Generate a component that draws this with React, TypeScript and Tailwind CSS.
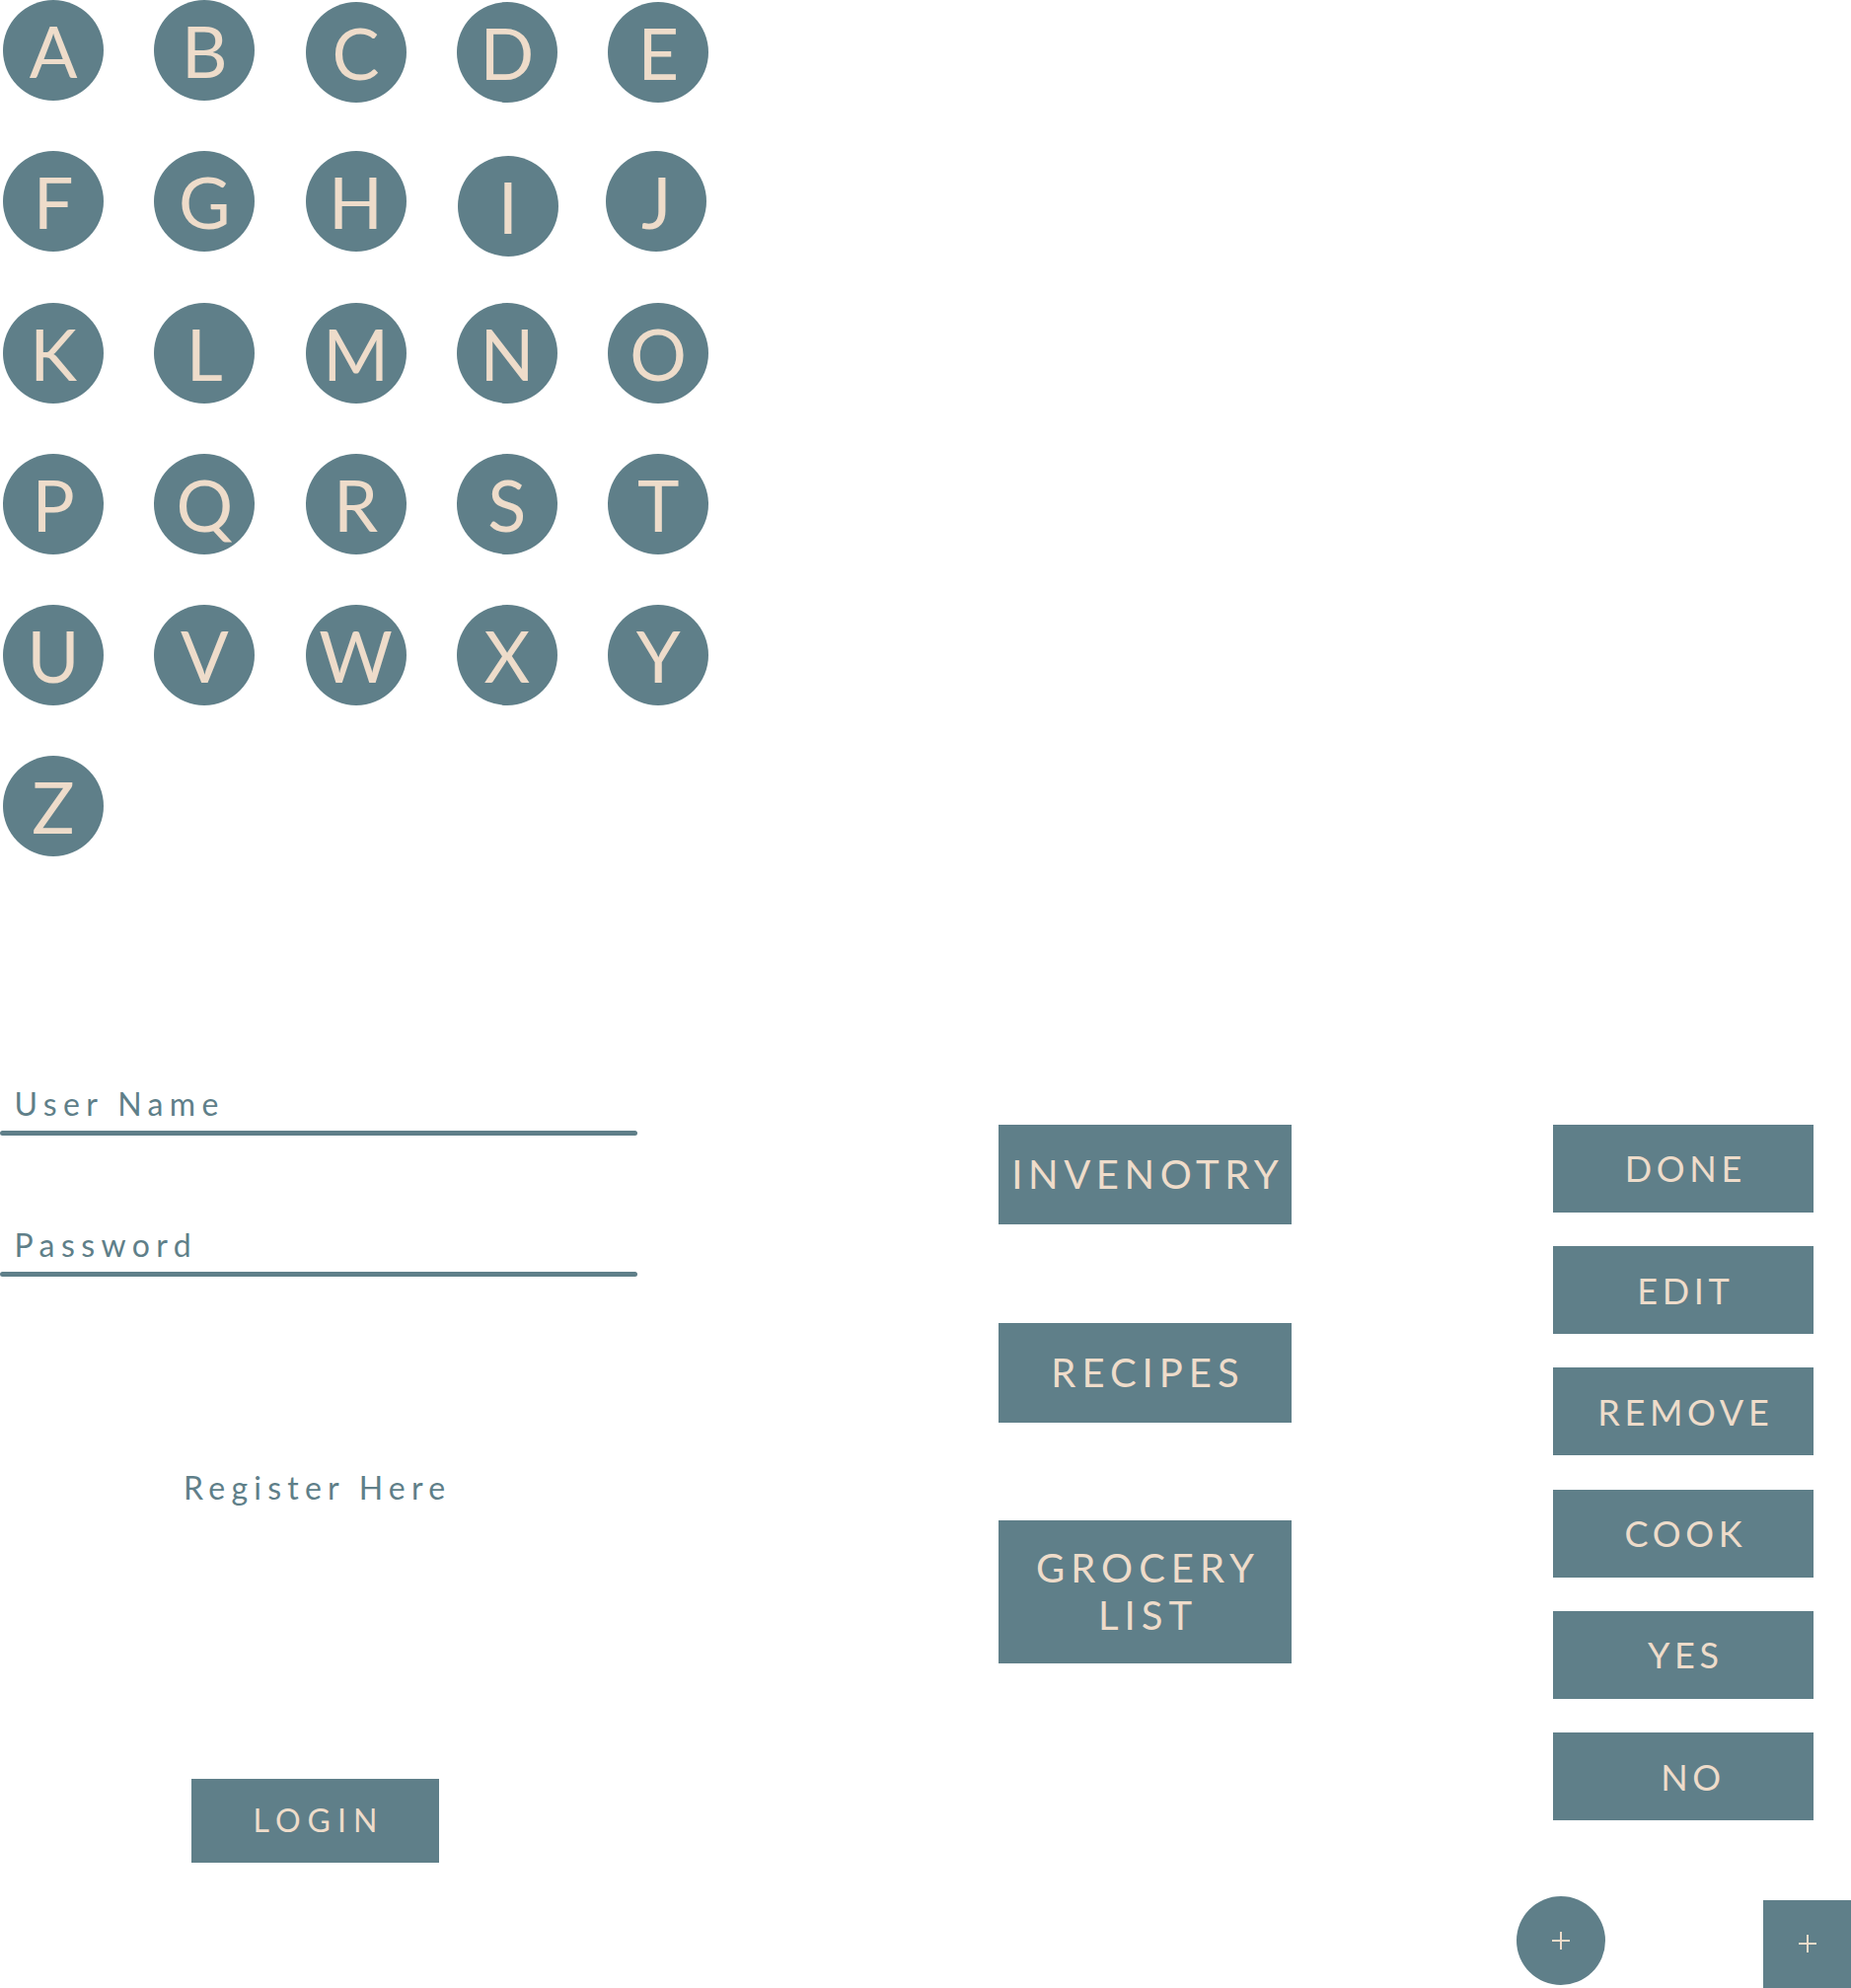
const letters = "ABCDEFGHIJKLMNOPQRSTUVWXYZ".split("");

// tiny offsets the mockup has on a few of the circles (transform so the grid rows stay put)
const nudge: Record<string, string> = {
  C: "translate-y-[2px]",
  D: "translate-y-[2px]",
  E: "translate-y-[2px]",
  I: "translate-y-[5px] translate-x-[1px]",
  J: "-translate-x-[2px]",
};

const rightButtons = ["DONE", "EDIT", "REMOVE", "COOK", "YES", "NO"];

function Plus() {
  return (
    <svg width="20" height="20" viewBox="0 0 20 20" fill="none" stroke="#EEDCCA" strokeWidth="2">
      <path d="M10 1v18M1 10h18" />
    </svg>
  );
}

function Underline() {
  return <div className="mt-[11px] h-[5px] w-[646px] rounded-full bg-[#5F7F89]" />;
}

export default function App() {
  return (
    <div className="relative h-[2015px] w-[1876px] overflow-hidden bg-white [font-family:Lato,'Liberation_Sans',sans-serif]">
      {/* letter avatars */}
      <div className="grid grid-cols-[repeat(5,102px)] gap-[51.3px] pl-[3px]">
        {letters.map((l) => (
          <div
            key={l}
            className={`flex h-[102px] w-[102px] items-center justify-center rounded-full bg-[#5F7F89] text-[72px] leading-none font-normal text-[#EEDCCA] ${nudge[l] ?? ""}`}
          >
            {l}
          </div>
        ))}
      </div>

      <div className="mt-[232px] flex items-start">
        {/* login form */}
        <div className="flex w-[646px] flex-col pt-[2.5px]">
          <div className="pl-[14.5px] text-[32px] leading-none tracking-[0.2em] text-[#5F7F89]">User Name</div>
          <Underline />
          <div className="mt-[94.7px] pl-[14.5px] text-[32px] leading-none tracking-[0.2em] text-[#5F7F89]">
            Password
          </div>
          <Underline />
          <div className="mt-[198px] ml-[186px] text-[32px] leading-none tracking-[0.195em] text-[#5F7F89]">
            Register Here
          </div>
          <button className="mt-[279px] ml-[194px] flex h-[85px] w-[251px] items-center justify-center bg-[#5F7F89] pl-[0.22em] text-[32px] leading-none tracking-[0.22em] text-[#EEDCCA]">
            LOGIN
          </button>
        </div>

        {/* main nav */}
        <div className="ml-[366px] flex w-[297px] flex-col gap-[99.7px] pt-[39.5px]">
          <button className="flex h-[101px] items-center justify-center bg-[#5F7F89] pl-[0.14em] text-[40px] leading-none tracking-[0.14em] text-[#EEDCCA]">
            INVENOTRY
          </button>
          <button className="flex h-[101px] items-center justify-center bg-[#5F7F89] pl-[0.15em] text-[40px] leading-none tracking-[0.15em] text-[#EEDCCA]">
            RECIPES
          </button>
          <button className="flex h-[145px] flex-col items-center justify-center bg-[#5F7F89] pl-[0.15em] text-[40px] leading-[47.5px] tracking-[0.15em] text-[#EEDCCA]">
            <span>GROCERY</span>
            <span>LIST</span>
          </button>
        </div>

        {/* actions */}
        <div className="ml-[228px] flex w-[339px] flex-col pt-[39.3px]">
          <div className="ml-[37px] flex flex-col gap-[34.3px]">
            {rightButtons.map((b) => (
              <button
                key={b}
                className={`flex h-[89px] w-[264px] items-center justify-center bg-[#5F7F89] text-[36px] leading-none tracking-[0.13em] text-[#EEDCCA] ${b === "NO" ? "pl-[20px]" : "pl-[0.13em]"}`}
              >
                {b}
              </button>
            ))}
          </div>
          <div className="mt-[76.7px] flex items-start">
            <button className="flex h-[90px] w-[90px] items-center justify-center rounded-full bg-[#5F7F89]">
              <Plus />
            </button>
            <button className="mt-[4px] ml-[160px] flex h-[89px] w-[89px] items-center justify-center bg-[#5F7F89]">
              <Plus />
            </button>
          </div>
        </div>
      </div>
    </div>
  );
}
